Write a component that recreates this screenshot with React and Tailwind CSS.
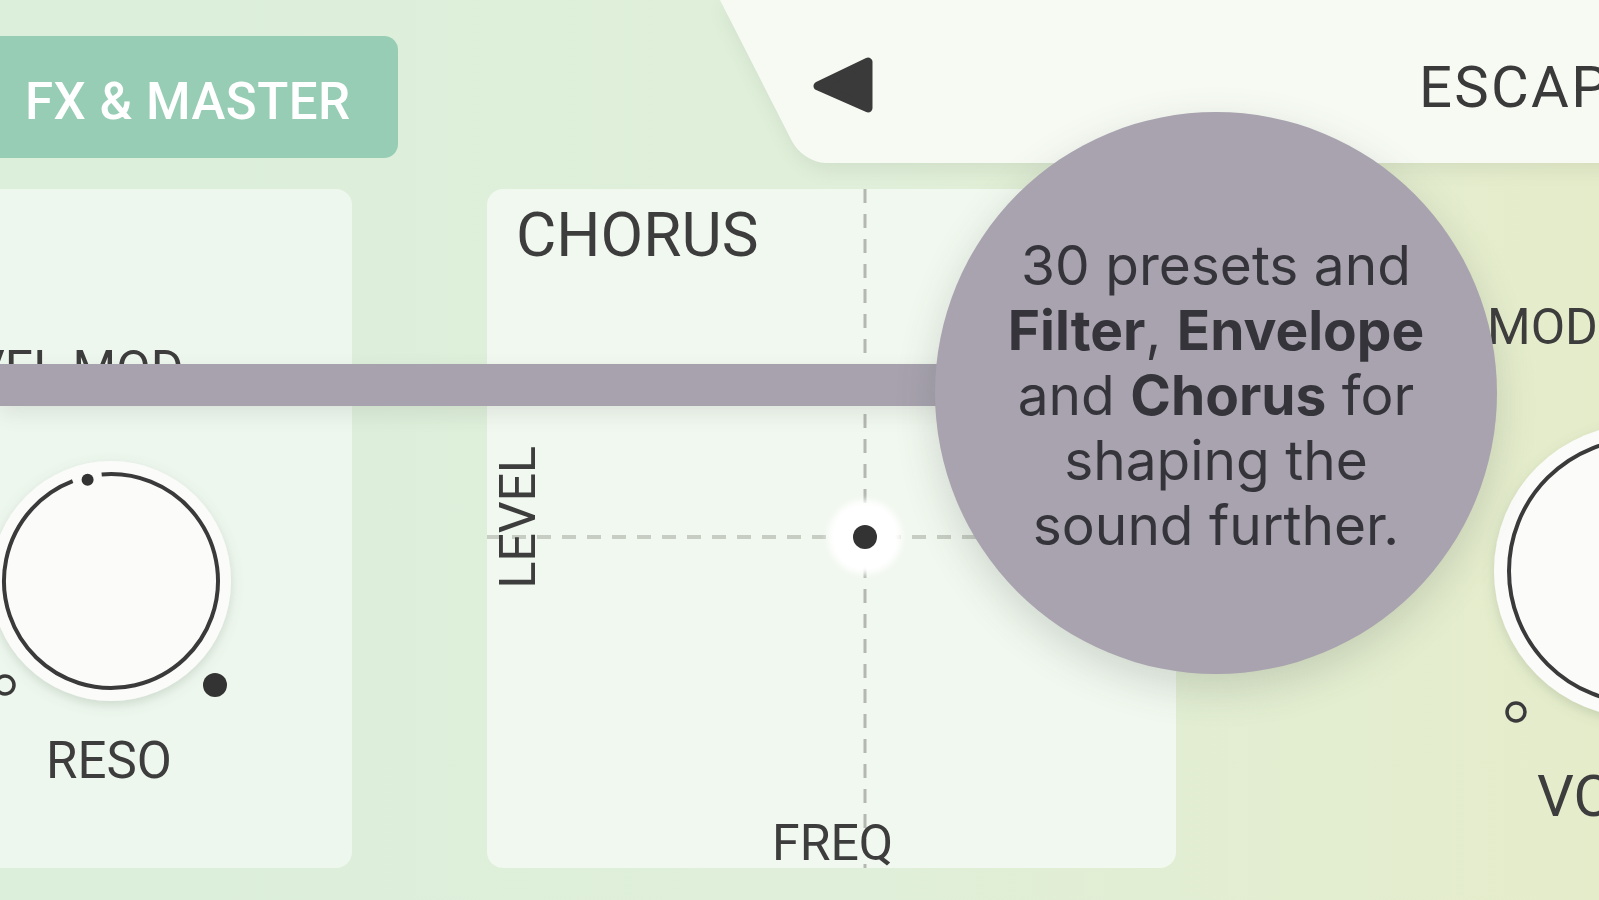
import React from "react"

// Knob drawing: white cap, dark ring with a gap at the pointer, min/max dots
function Knob({ size, ring, cap, pointer, dots }) {
  const c = size / 2
  return (
    <svg width={size} height={size} viewBox={`0 0 ${size} ${size}`} className="block shrink-0">
      <defs>
        <filter id={`ks${size}`} x="-20%" y="-20%" width="140%" height="140%">
          <feDropShadow dx="0" dy="4" stdDeviation="6" floodColor="#6b7f6b" floodOpacity="0.25" />
        </filter>
      </defs>
      <circle cx={c} cy={c} r={cap} fill="#fbfcfa" filter={`url(#ks${size})`} />
      {pointer ? (
        <>
          <path d={pointer.arc} fill="none" stroke="#3a3a3a" strokeWidth="4" />
          <circle cx={pointer.x} cy={pointer.y} r="6" fill="#333" />
        </>
      ) : (
        <circle cx={c} cy={c} r={ring} fill="none" stroke="#3a3a3a" strokeWidth="4" />
      )}
      {dots.map((d, i) =>
        d.filled ? (
          <circle key={i} cx={d.x} cy={d.y} r="12" fill="#333" />
        ) : (
          <circle key={i} cx={d.x} cy={d.y} r="9" fill="none" stroke="#3a3a3a" strokeWidth="3.5" />
        )
      )}
    </svg>
  )
}

export default function App() {
  return (
    <div className="relative h-[900px] w-[1599px] overflow-hidden bg-linear-to-r from-[#dbefdb] via-[#e0efd9] via-55% to-[#e5ecca] font-[Roboto,sans-serif] text-[#3d3d3d]">
      {/* Header */}
      <div className="flex h-[189px]">
        <div className="mt-[36px] flex h-[122px] w-[398px] shrink-0 items-center rounded-r-[14px] bg-[#96cdb4] pl-[25px] pt-[8px] text-[51px] font-medium leading-none tracking-[0.01em] text-white">
          FX &amp; MASTER
        </div>
        <div className="relative ml-[322px] h-[163px] flex-1">
          <div className="absolute inset-y-0 left-0 -right-[300px] origin-top-left skew-x-[27deg] rounded-bl-[22px] bg-[#f6faf3] shadow-[0_6px_18px_rgba(90,110,90,0.12)]" />
          <div className="relative flex items-start pl-[90px] pt-[56px]">
            <svg width="64" height="58" viewBox="0 0 64 58" className="block shrink-0">
              <path d="M58 6 L58 52 L8 30 Z" fill="#3a3a3a" stroke="#3a3a3a" strokeWidth="9" strokeLinejoin="round" />
            </svg>
            <div className="ml-[545px] mt-[2px] whitespace-nowrap text-[58px] leading-none tracking-[0.04em] text-[#3a3a3a]">
              ESCAPE
            </div>
          </div>
        </div>
      </div>

      {/* Panels */}
      <div className="flex h-[679px]">
        {/* Filter panel (left, cut off) */}
        <div className="-ml-[60px] flex h-full w-[412px] shrink-0 flex-col rounded-[16px] bg-[#eef7ee]">
          <div className="ml-[33px] mt-[155px] whitespace-nowrap text-[50px] leading-none">VEL MOD</div>
          <div className="ml-[21px] mt-[37px]">
            <Knob
              size={300}
              ring={107}
              cap={120}
              pointer={{ arc: "M 140.67 43.41 A 107 107 0 1 1 111.65 50.11", x: 126.6, y: 48.7 }}
              dots={[
                { x: 254, y: 254, filled: true },
                { x: 44, y: 254, filled: false },
              ]}
            />
          </div>
          <div className="ml-[106px] mt-[4px] text-[51px] leading-none">RESO</div>
        </div>

        {/* Chorus XY pad */}
        <div className="relative ml-[135px] flex h-full w-[689px] shrink-0 flex-col rounded-[16px] bg-[#f1f8ef]">
          <svg width="689" height="679" viewBox="0 0 689 679" className="absolute inset-0">
            <defs>
              <filter id="halo" x="-50%" y="-50%" width="200%" height="200%">
                <feGaussianBlur stdDeviation="3" />
              </filter>
            </defs>
            <line x1="378" y1="0" x2="378" y2="679" stroke="#b3b8b0" strokeWidth="3" strokeDasharray="14 11" />
            <line x1="0" y1="348" x2="689" y2="348" stroke="#c7cdc3" strokeWidth="4" strokeDasharray="14 11" />
            <circle cx="378" cy="348" r="37" fill="#ffffff" filter="url(#halo)" />
            <circle cx="378" cy="348" r="12" fill="#333" />
          </svg>
          <div className="relative pl-[29px] pt-[15px] text-[62px] leading-none">CHORUS</div>
          <div className="relative ml-[6px] mt-[180px] w-[50px] rotate-180 text-[50px] leading-none [writing-mode:vertical-rl]">
            LEVEL
          </div>
          <div className="relative ml-[285px] mt-auto text-[50px] leading-none">FREQ</div>
        </div>

        {/* Master area (right, cut off) */}
        <div className="flex flex-1 flex-col">
          <div className="ml-[311px] mt-[113px] whitespace-nowrap text-[50px] leading-none">MOD</div>
          <div className="ml-[295px] mt-[49px]">
            <Knob size={340} ring={132} cap={147} dots={[{ x: 45, y: 311, filled: false }]} />
          </div>
          <div className="ml-[361px] mt-[26px] whitespace-nowrap text-[58px] leading-none">VOLUME</div>
        </div>
      </div>

      {/* Tooltip callout */}
      <div className="pointer-events-none absolute inset-0 z-10">
        <div className="absolute left-0 top-[364px] h-[42px] w-[1000px] bg-[#a7a2ae] shadow-[0_8px_20px_rgba(80,90,80,0.12)]" />
        <div className="absolute left-[935px] top-[112px] flex size-[562px] items-center justify-center rounded-full bg-[#a8a3af] text-center font-[Inter,sans-serif] text-[55px] leading-[65px] text-[#36343b] shadow-[0_14px_40px_rgba(70,80,70,0.2)]">
          <p className="pt-[4px]">
            30 presets and
            <br />
            <b className="font-bold">Filter</b>, <b className="font-bold">Envelope</b>
            <br />
            and <b className="font-bold">Chorus</b> for
            <br />
            shaping the
            <br />
            sound further.
          </p>
        </div>
      </div>
    </div>
  )
}
